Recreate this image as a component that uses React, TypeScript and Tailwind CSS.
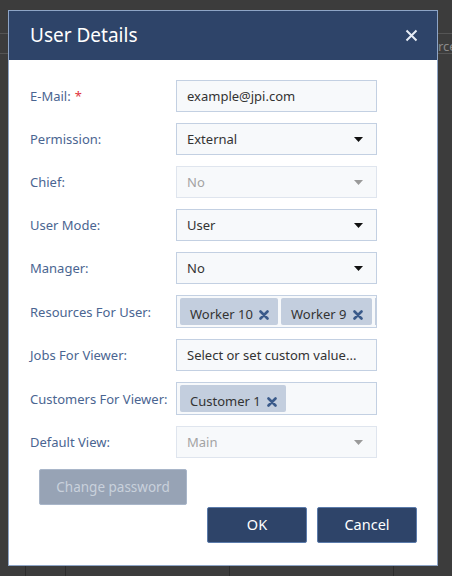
import { ReactNode } from "react";

type Row = {
  label: string;
  required?: boolean;
  kind: "input" | "select" | "tags" | "placeholder";
  value?: string;
  tags?: string[];
  disabled?: boolean;
};

const ROWS: Row[] = [
  { label: "E-Mail:", required: true, kind: "input", value: "example@jpi.com" },
  { label: "Permission:", kind: "select", value: "External" },
  { label: "Chief:", kind: "select", value: "No", disabled: true },
  { label: "User Mode:", kind: "select", value: "User" },
  { label: "Manager:", kind: "select", value: "No" },
  { label: "Resources For User:", kind: "tags", tags: ["Worker 10", "Worker 9"] },
  { label: "Jobs For Viewer:", kind: "placeholder", value: "Select or set custom value..." },
  { label: "Customers For Viewer:", kind: "tags", tags: ["Customer 1"] },
  { label: "Default View:", kind: "select", value: "Main", disabled: true },
];

function Caret({ disabled }: { disabled?: boolean }) {
  return (
    <svg width="9" height="5" viewBox="0 0 9 5" className="shrink-0">
      <path d="M0 0h9L4.5 5z" fill={disabled ? "#9a9a9a" : "#111"} />
    </svg>
  );
}

function TagX() {
  return (
    <svg width="10" height="10" viewBox="0 0 10 10" className="shrink-0">
      <path d="M1.5 1.5l7 7M8.5 1.5l-7 7" stroke="#3a5a8a" strokeWidth="2.6" strokeLinecap="round" />
    </svg>
  );
}

function Field({ row }: { row: Row }) {
  if (row.kind === "tags") {
    return (
      <div className="flex h-[33px] w-[201px] items-stretch gap-[3px] overflow-hidden border border-[#c3d0e2] bg-[#f7f9fb] py-[2px] pl-[3px]">
        {row.tags!.map((t) => (
          <span
            key={t}
            className="flex shrink-0 items-center gap-[6px] whitespace-nowrap rounded-[2px] bg-[#c3cede] pt-[6px] pl-[10px] pr-[9px] text-[#333]"
          >
            {t}
            <TagX />
          </span>
        ))}
        {row.tags!.length > 1 && <span className="w-[3px] shrink-0 bg-[#c3cede]" />}
      </div>
    );
  }
  let content: ReactNode = null;
  if (row.kind === "select") {
    content = (
      <>
        <span className="flex-1">{row.value}</span>
        <Caret disabled={row.disabled} />
      </>
    );
  } else {
    content = <span>{row.value}</span>;
  }
  return (
    <div
      className={`flex h-[32px] w-[201px] items-center border bg-[#f7f9fb] pl-[10px] pr-[13px] pt-[1px] ${
        row.disabled ? "border-[#dfe5ee] text-[#a3a3a3]" : "border-[#c3d0e2] text-[#333]"
      }`}
    >
      {content}
    </div>
  );
}

export default function App() {
  return (
    <div
      className="relative h-[576px] w-[452px] overflow-hidden bg-[#3c3c3c]"
      style={{ fontFamily: '"Noto Sans", "Open Sans", sans-serif' }}
    >
      {/* page behind the dialog */}
      <div className="absolute left-0 top-[33px] h-px w-full bg-[#555]" />
      <div className="absolute left-0 top-[53px] h-px w-full bg-[#555]" />
      <div className="absolute left-[438px] top-[37px] w-[14px] overflow-hidden whitespace-nowrap text-[13px] text-[#8a8a8a]">rce</div>
      <div className="absolute left-[25px] top-[560px] h-[20px] w-px bg-[#2c2c2c]" />
      <div className="absolute left-[65px] top-[560px] h-[20px] w-px bg-[#2c2c2c]" />
      <div className="absolute left-[229px] top-[560px] h-[20px] w-px bg-[#2c2c2c]" />
      <div className="absolute left-[393px] top-[560px] h-[20px] w-px bg-[#2c2c2c]" />

      <div className="absolute left-[8px] top-[10px] flex h-[556px] w-[430px] flex-col border border-[#8ea5c6] bg-white">
        <div className="flex h-[49px] items-center justify-between bg-[#2e4469] pl-[21px] pr-[19px]">
          <span className="text-[19px] text-white">User Details</span>
          <svg width="13" height="13" viewBox="0 0 13 13">
            <path d="M1.5 1.5l10 10M11.5 1.5l-10 10" stroke="#e6ecf5" strokeWidth="2" />
          </svg>
        </div>

        <div className="flex flex-col gap-[11px] pl-[21px] pt-[20px] text-[13px]">
          {ROWS.map((row) => (
            <div key={row.label} className="flex items-center">
              <div className="w-[146px] pt-[2px] text-[#4a6591]">
                {row.label}
                {row.required && <span className="ml-[4px] text-[#e0343d]">*</span>}
              </div>
              <Field row={row} />
            </div>
          ))}
        </div>

        <div className="ml-[30px] mt-[11px]">
          <button
            type="button"
            className="h-[36px] w-[148px] rounded-[2px] border border-[#a9b6c9] bg-[#97a3b5] text-[13.5px] text-[#c9d1dc]"
          >
            Change password
          </button>
        </div>

        <div className="mr-[20px] mt-[2px] flex justify-end gap-[10px]">
          <button
            type="button"
            className="h-[36px] w-[100px] rounded-[2px] border border-[#5b7bab] bg-[#2e4469] text-[14.5px] text-white"
          >
            OK
          </button>
          <button
            type="button"
            className="h-[36px] w-[100px] rounded-[2px] border border-[#5b7bab] bg-[#2e4469] text-[14.5px] text-white"
          >
            Cancel
          </button>
        </div>
      </div>
    </div>
  );
}
